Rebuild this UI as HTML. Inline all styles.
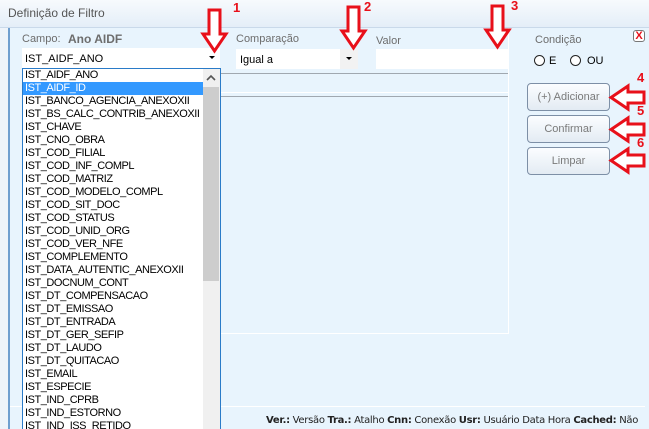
<!DOCTYPE html>
<html><head><meta charset="utf-8"><style>
*{margin:0;padding:0;box-sizing:border-box}
body{width:649px;height:429px;overflow:hidden;background:#eef4fa;font-family:"Liberation Sans",Tahoma,sans-serif;font-size:11px;color:#000;position:relative}
.a{position:absolute}
.title{left:0;top:0;width:649px;height:28px;background:linear-gradient(#f7fafd,#e4eef8);border-bottom:1px solid #c9d9ea}
.panel{left:8px;top:28px;width:641px;height:401px;background:#e8f4fd;border-left:2px solid #6f9fcf}
.lbl{color:#6d6d6d;font-size:11px}
.inp{background:#fff}
.btn{width:83px;height:28px;border:1px solid #7d8fa6;border-radius:4px;background:linear-gradient(#fbfdff,#e3ebf3);color:#7a7a7a;text-align:center;line-height:26px;font-size:11px}
.list{left:22px;top:68px;width:199px;height:361px;background:#fff;border:1px solid #2a7bc8;border-bottom:none;overflow:hidden}
.row{height:13px;line-height:13px;padding-left:2px;font-size:11px;letter-spacing:-0.45px;white-space:nowrap}
.sel{background:#3399ff;color:#fff;width:180px}
.num{color:#e8101a;font-weight:bold;font-size:13px}
.radio{width:11px;height:11px;border:1px solid #222;border-radius:50%;background:#fff}
</style></head><body>
<div class="a title"></div>
<div class="a" style="left:8px;top:6px;font-size:12px;color:#555">Definição de Filtro</div>
<div class="a panel"></div>
<div class="a lbl" style="left:22px;top:33px">Campo:</div>
<div class="a" style="left:68px;top:32px;font-weight:bold;color:#6d6d6d;font-size:12px">Ano AIDF</div>
<div class="a inp" style="left:22px;top:48px;width:198px;height:20px"></div>
<div class="a" style="left:25px;top:53px">IST_AIDF_ANO</div>
<div class="a" style="left:209px;top:56px;border-left:3px solid transparent;border-right:3px solid transparent;border-top:3px solid #000"></div>
<div class="a lbl" style="left:236px;top:33px">Comparação</div>
<div class="a inp" style="left:236px;top:49px;width:122px;height:20px"></div>
<div class="a" style="left:340px;top:49px;width:18px;height:20px;background:#f2f2f2"></div>
<div class="a" style="left:240px;top:54px">Igual a</div>
<div class="a" style="left:346px;top:57px;border-left:3px solid transparent;border-right:3px solid transparent;border-top:3px solid #000"></div>
<div class="a lbl" style="left:376px;top:35px">Valor</div>
<div class="a inp" style="left:376px;top:49px;width:133px;height:20px"></div>
<div class="a" style="left:220px;top:73px;width:289px;height:1px;background:#a0a8b0"></div>
<div class="a" style="left:220px;top:92px;width:289px;height:1px;background:#fff"></div>
<div class="a" style="left:220px;top:96px;width:289px;height:1px;background:#a0a8b0"></div>
<div class="a" style="left:508px;top:28px;width:1px;height:305px;background:#fff"></div>
<div class="a" style="left:220px;top:333px;width:289px;height:1px;background:#fff"></div>
<div class="a" style="left:10px;top:406px;width:635px;height:1px;background:#fff"></div>
<div class="a lbl" style="left:535px;top:34px">Condição</div>
<div class="a radio" style="left:534px;top:55px"></div><div class="a" style="left:549px;top:55px">E</div>
<div class="a radio" style="left:570px;top:55px"></div><div class="a" style="left:587px;top:55px">OU</div>
<div class="a" style="left:633px;top:30px;width:12px;height:12px;border:1px solid #777;border-radius:3px;background:#fff;color:#e8101a;font-weight:bold;font-size:11px;line-height:10px;text-align:center">X</div>
<div class="a btn" style="left:527px;top:83px">(+) Adicionar</div>
<div class="a btn" style="left:527px;top:115px">Confirmar</div>
<div class="a btn" style="left:527px;top:147px">Limpar</div>
<div class="a" style="left:266px;top:415px;font-size:10px;color:#222;font-family:'DejaVu Sans',sans-serif;white-space:nowrap;letter-spacing:-0.3px"><b>Ver.:</b> Versão <b>Tra.:</b> Atalho <b>Cnn:</b> Conexão <b>Usr:</b> Usuário Data Hora <b>Cached:</b> Não</div>
<div class="a list">
<div class="row">IST_AIDF_ANO</div>
<div class="row sel">IST_AIDF_ID</div>
<div class="row">IST_BANCO_AGENCIA_ANEXOXII</div>
<div class="row">IST_BS_CALC_CONTRIB_ANEXOXII</div>
<div class="row">IST_CHAVE</div>
<div class="row">IST_CNO_OBRA</div>
<div class="row">IST_COD_FILIAL</div>
<div class="row">IST_COD_INF_COMPL</div>
<div class="row">IST_COD_MATRIZ</div>
<div class="row">IST_COD_MODELO_COMPL</div>
<div class="row">IST_COD_SIT_DOC</div>
<div class="row">IST_COD_STATUS</div>
<div class="row">IST_COD_UNID_ORG</div>
<div class="row">IST_COD_VER_NFE</div>
<div class="row">IST_COMPLEMENTO</div>
<div class="row">IST_DATA_AUTENTIC_ANEXOXII</div>
<div class="row">IST_DOCNUM_CONT</div>
<div class="row">IST_DT_COMPENSACAO</div>
<div class="row">IST_DT_EMISSAO</div>
<div class="row">IST_DT_ENTRADA</div>
<div class="row">IST_DT_GER_SEFIP</div>
<div class="row">IST_DT_LAUDO</div>
<div class="row">IST_DT_QUITACAO</div>
<div class="row">IST_EMAIL</div>
<div class="row">IST_ESPECIE</div>
<div class="row">IST_IND_CPRB</div>
<div class="row">IST_IND_ESTORNO</div>
<div class="row">IST_IND_ISS_RETIDO</div>
</div>
<div class="a" style="left:203px;top:69px;width:17px;height:360px;background:#f0f0f0"></div>
<div class="a" style="left:203px;top:87px;width:16px;height:194px;background:#cdcdcd"></div>
<svg class="a" style="left:0;top:0" width="649" height="429">
<path d="M207 80 L211 76 L215 80" fill="none" stroke="#555" stroke-width="1.6"/>
<g fill="#fff" stroke="#e8101a" stroke-width="3" stroke-linejoin="miter">
<path d="M209 10 H220 V34 H226 L214.5 51 L203 34 H209 Z"/>
<path d="M348 7 H359 V31 H365 L353.5 48 L342 31 H348 Z"/>
<path d="M492 6 H503 V30 H509 L497.5 47 L486 30 H492 Z"/>
<path d="M644 92 V103 H628 V109 L611 97.5 L628 86 V92 Z"/>
<path d="M644 124 V135 H628 V141 L611 129.5 L628 118 V124 Z"/>
<path d="M644 155 V166 H628 V172 L611 160.5 L628 149 V155 Z"/>
</g></svg>
<div class="a num" style="left:233px;top:0px">1</div>
<div class="a num" style="left:364px;top:-1px">2</div>
<div class="a num" style="left:511px;top:-2px">3</div>
<div class="a num" style="left:637px;top:70px">4</div>
<div class="a num" style="left:637px;top:103px">5</div>
<div class="a num" style="left:637px;top:135px">6</div>
</body></html>
